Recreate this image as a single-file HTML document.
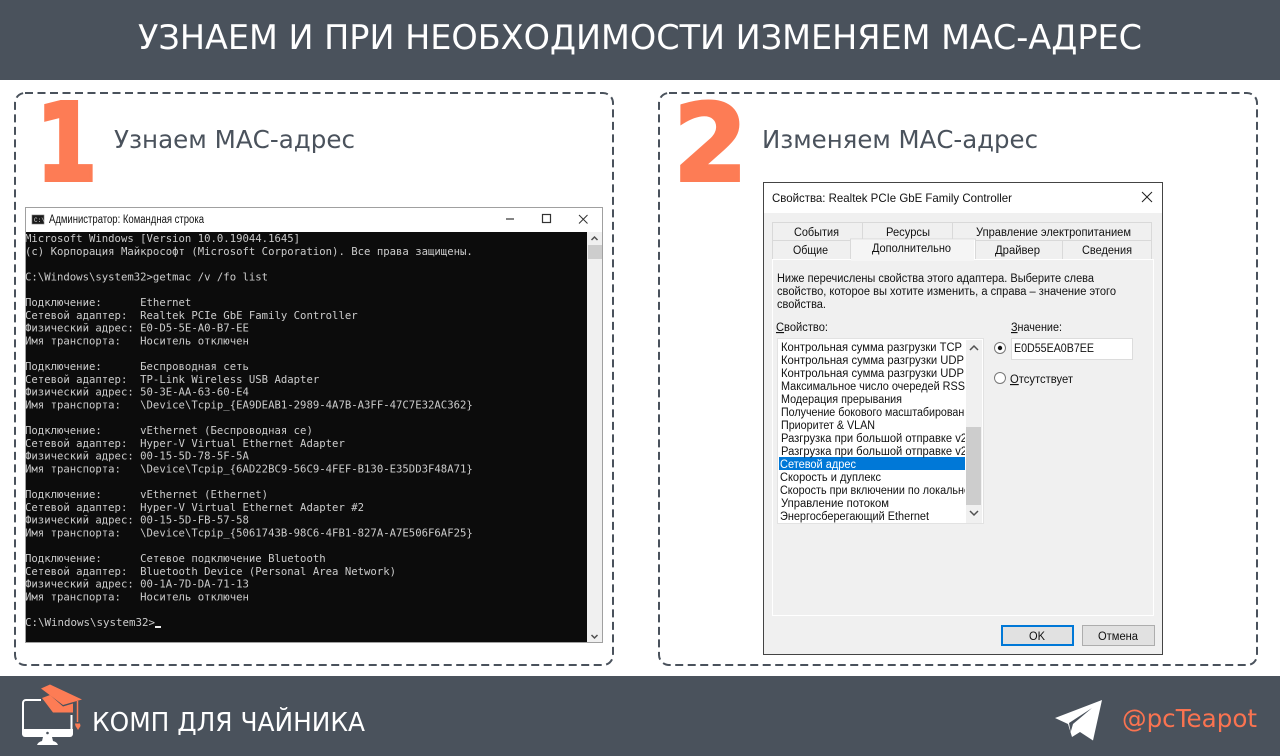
<!DOCTYPE html>
<html lang="ru">
<head>
<meta charset="utf-8">
<title>МАС-адрес</title>
<style>
html,body{margin:0;padding:0;width:1280px;height:756px;overflow:hidden;background:#fff}
svg{display:block;position:absolute;left:0;top:0}
.dj{font-family:"DejaVu Sans",sans-serif}
.con text{font-family:"DejaVu Sans Mono","Liberation Mono",monospace;font-size:10.64px;fill:#cccccc}
.ui{font-family:"Liberation Sans",sans-serif;font-size:11.5px;fill:#111}
.ui text{font-family:"Liberation Sans",sans-serif}
</style>
</head>
<body>
<svg width="1280" height="756" viewBox="0 0 1280 756" xmlns="http://www.w3.org/2000/svg">
<defs>
<clipPath id="listclip"><rect x="779" y="339" width="186" height="184"/></clipPath>
</defs>
<rect width="1280" height="80" fill="#4a525c"/>
<text class="dj" x="138" y="49" font-size="34" fill="#fff" textLength="1004" lengthAdjust="spacingAndGlyphs">УЗНАЕМ И ПРИ НЕОБХОДИМОСТИ ИЗМЕНЯЕМ МАС-АДРЕС</text>

<rect x="15" y="93" width="598" height="572" rx="10" fill="#fff" stroke="#4a525c" stroke-width="2" stroke-dasharray="8 4.5"/>
<rect x="659" y="93" width="598" height="572" rx="10" fill="#fff" stroke="#4a525c" stroke-width="2" stroke-dasharray="8 4.5"/>

<text class="dj" transform="translate(66.5 180) scale(.82 1)" text-anchor="middle" font-size="107" font-weight="700" fill="#fd7c55" stroke="#fd7c55" stroke-width="4">1</text>
<text class="dj" transform="translate(710.5 180.5)" text-anchor="middle" font-size="107" font-weight="700" fill="#fd7c55" stroke="#fd7c55" stroke-width="3">2</text>
<text class="dj" x="114" y="148" font-size="25" fill="#4a525c" textLength="241" lengthAdjust="spacingAndGlyphs">Узнаем МАС-адрес</text>
<text class="dj" x="762" y="148" font-size="25" fill="#4a525c" textLength="276" lengthAdjust="spacingAndGlyphs">Изменяем МАС-адрес</text>

<!-- CMD window -->
<rect x="25.5" y="207.5" width="577" height="435" fill="#fff" stroke="#a0a0a0"/>
<rect x="32" y="215" width="12" height="9" fill="#1a1a1a" stroke="#777" stroke-width=".6"/>
<text x="34" y="222" font-family="Liberation Mono,monospace" font-size="6" fill="#ddd">C:\</text>
<text class="ui" x="49" y="223" style="font-size:11.5px" textLength="155" lengthAdjust="spacingAndGlyphs">Администратор: Командная строка</text>
<path d="M506 219h8" stroke="#333" stroke-width="1.2"/>
<rect x="542.5" y="214.5" width="8" height="8" fill="none" stroke="#333" stroke-width="1.2"/>
<path d="M579 215l8.500 8.500M587.500 215l-8.500 8.500" stroke="#333" stroke-width="1"/>
<rect x="26" y="232" width="561" height="410" fill="#0c0c0c"/>
<rect x="587" y="232" width="15" height="410" fill="#f0f0f0"/>
<rect x="588" y="245" width="14" height="14" fill="#cdcdcd"/>
<path d="M591.500 240l3-3 3 3" fill="none" stroke="#505050" stroke-width="1.500"/>
<path d="M591.500 635l3 3 3-3" fill="none" stroke="#505050" stroke-width="1.500"/>
<g class="con">
<text x="25" y="242">Microsoft Windows [Version 10.0.19044.1645]</text>
<text x="25" y="254.800">(c) Корпорация Майкрософт (Microsoft Corporation). Все права защищены.</text>
<text x="25" y="280.400">C:\Windows\system32&gt;getmac /v /fo list</text>
<text x="25" y="306" xml:space="preserve">Подключение:      Ethernet</text>
<text x="25" y="318.800" xml:space="preserve">Сетевой адаптер:  Realtek PCIe GbE Family Controller</text>
<text x="25" y="331.600" xml:space="preserve">Физический адрес: E0-D5-5E-A0-B7-EE</text>
<text x="25" y="344.400" xml:space="preserve">Имя транспорта:   Носитель отключен</text>
<text x="25" y="370" xml:space="preserve">Подключение:      Беспроводная сеть</text>
<text x="25" y="382.800" xml:space="preserve">Сетевой адаптер:  TP-Link Wireless USB Adapter</text>
<text x="25" y="395.600" xml:space="preserve">Физический адрес: 50-3E-AA-63-60-E4</text>
<text x="25" y="408.400" xml:space="preserve">Имя транспорта:   \Device\Tcpip_{EA9DEAB1-2989-4A7B-A3FF-47C7E32AC362}</text>
<text x="25" y="434" xml:space="preserve">Подключение:      vEthernet (Беспроводная се)</text>
<text x="25" y="446.800" xml:space="preserve">Сетевой адаптер:  Hyper-V Virtual Ethernet Adapter</text>
<text x="25" y="459.600" xml:space="preserve">Физический адрес: 00-15-5D-78-5F-5A</text>
<text x="25" y="472.400" xml:space="preserve">Имя транспорта:   \Device\Tcpip_{6AD22BC9-56C9-4FEF-B130-E35DD3F48A71}</text>
<text x="25" y="498" xml:space="preserve">Подключение:      vEthernet (Ethernet)</text>
<text x="25" y="510.800" xml:space="preserve">Сетевой адаптер:  Hyper-V Virtual Ethernet Adapter #2</text>
<text x="25" y="523.600" xml:space="preserve">Физический адрес: 00-15-5D-FB-57-58</text>
<text x="25" y="536.400" xml:space="preserve">Имя транспорта:   \Device\Tcpip_{5061743B-98C6-4FB1-827A-A7E506F6AF25}</text>
<text x="25" y="562" xml:space="preserve">Подключение:      Сетевое подключение Bluetooth</text>
<text x="25" y="574.800" xml:space="preserve">Сетевой адаптер:  Bluetooth Device (Personal Area Network)</text>
<text x="25" y="587.600" xml:space="preserve">Физический адрес: 00-1A-7D-DA-71-13</text>
<text x="25" y="600.400" xml:space="preserve">Имя транспорта:   Носитель отключен</text>
<text x="25" y="626" textLength="130" lengthAdjust="spacingAndGlyphs">C:\Windows\system32&gt;</text>
</g>
<rect x="155" y="626" width="6" height="2" fill="#eee"/>

<!-- Dialog -->
<rect x="763.500" y="182.500" width="399" height="472" fill="#f0f0f0" stroke="#444"/>
<rect x="764" y="183" width="398" height="30" fill="#fff"/>
<path d="M1142 192l10 10M1152 192l-10 10" stroke="#222" stroke-width="1"/>
<g class="ui">
<text x="772" y="202" style="font-size:12px" textLength="240" lengthAdjust="spacingAndGlyphs">Свойства: Realtek PCIe GbE Family Controller</text>

<g fill="#f0f0f0" stroke="#d9d9d9">
<rect x="772.500" y="222.500" width="90" height="18"/>
<rect x="862.500" y="222.500" width="90" height="18"/>
<rect x="952.500" y="222.500" width="199" height="18"/>
<rect x="772.500" y="240.500" width="78" height="19"/>
<rect x="975.500" y="240.500" width="87" height="19"/>
<rect x="1062.500" y="240.500" width="89" height="19"/>
</g>
<rect x="772" y="259" width="382" height="357" fill="#fff"/>
<rect x="773" y="260" width="380" height="355" fill="#f0f0f0"/>
<rect x="850" y="239" width="125" height="21" fill="#fff"/>
<rect x="851" y="240" width="123" height="21" fill="#f5f5f5"/>
<path d="M850.500 259v-20h125v20" fill="none" stroke="#d9d9d9"/>

<text x="794" y="236" textLength="45" lengthAdjust="spacingAndGlyphs">События</text>
<text x="886" y="236" textLength="44" lengthAdjust="spacingAndGlyphs">Ресурсы</text>
<text x="976" y="236" textLength="155" lengthAdjust="spacingAndGlyphs">Управление электропитанием</text>
<text x="793" y="254" textLength="35" lengthAdjust="spacingAndGlyphs">Общие</text>
<text x="872" y="252" textLength="79" lengthAdjust="spacingAndGlyphs">Дополнительно</text>
<text x="995" y="254" textLength="45" lengthAdjust="spacingAndGlyphs">Драйвер</text>
<text x="1082" y="254" textLength="50" lengthAdjust="spacingAndGlyphs">Сведения</text>

<text x="777" y="282" textLength="317" lengthAdjust="spacingAndGlyphs">Ниже перечислены свойства этого адаптера. Выберите слева</text>
<text x="777" y="295" textLength="339" lengthAdjust="spacingAndGlyphs">свойство, которое вы хотите изменить, а справа – значение этого</text>
<text x="777" y="308" textLength="49" lengthAdjust="spacingAndGlyphs">свойства.</text>
<text x="776" y="331" textLength="52" lengthAdjust="spacingAndGlyphs"><tspan text-decoration="underline">С</tspan>войство:</text>
<text x="1011" y="331" textLength="51" lengthAdjust="spacingAndGlyphs"><tspan text-decoration="underline">З</tspan>начение:</text>

<rect x="777.500" y="338.500" width="206" height="185" fill="#fff" stroke="#e2e2e2"/>
<rect x="966" y="340" width="16" height="183" fill="#f0f0f0"/>
<rect x="966" y="427" width="15" height="78" fill="#cdcdcd"/>
<path d="M970 350l4-4 4 4" fill="none" stroke="#505050" stroke-width="1.500"/>
<path d="M970 511l4 4 4-4" fill="none" stroke="#505050" stroke-width="1.500"/>
<rect x="779" y="457" width="186" height="13" fill="#0078d7"/>
<g clip-path="url(#listclip)">
<text x="781" y="351" textLength="181" lengthAdjust="spacingAndGlyphs">Контрольная сумма разгрузки TCP</text>
<text x="781" y="364" textLength="183" lengthAdjust="spacingAndGlyphs">Контрольная сумма разгрузки UDP</text>
<text x="781" y="377" textLength="183" lengthAdjust="spacingAndGlyphs">Контрольная сумма разгрузки UDP</text>
<text x="781" y="390" textLength="184" lengthAdjust="spacingAndGlyphs">Максимальное число очередей RSS</text>
<text x="781" y="403" textLength="121" lengthAdjust="spacingAndGlyphs">Модерация прерывания</text>
<text x="781" y="416" textLength="195" lengthAdjust="spacingAndGlyphs">Получение бокового масштабирования</text>
<text x="781" y="429" textLength="94" lengthAdjust="spacingAndGlyphs">Приоритет &amp; VLAN</text>
<text x="781" y="442" textLength="186" lengthAdjust="spacingAndGlyphs">Разгрузка при большой отправке v2</text>
<text x="781" y="455" textLength="186" lengthAdjust="spacingAndGlyphs">Разгрузка при большой отправке v2</text>
<text x="780" y="468" style="fill:#fff" textLength="76" lengthAdjust="spacingAndGlyphs">Сетевой адрес</text>
<text x="780" y="481" textLength="101" lengthAdjust="spacingAndGlyphs">Скорость и дуплекс</text>
<text x="780" y="494" textLength="196" lengthAdjust="spacingAndGlyphs">Скорость при включении по локальной</text>
<text x="781" y="507" textLength="108" lengthAdjust="spacingAndGlyphs">Управление потоком</text>
<text x="780" y="520" textLength="149" lengthAdjust="spacingAndGlyphs">Энергосберегающий Ethernet</text>
</g>

<circle cx="1000" cy="348" r="5.500" fill="#fff" stroke="#777"/>
<circle cx="1000" cy="348" r="2.200" fill="#111"/>
<circle cx="1000" cy="378" r="5.500" fill="#fff" stroke="#777"/>
<rect x="1011.500" y="338.500" width="121" height="21" fill="#fff" stroke="#dcdcdc"/>
<text x="1014" y="352" textLength="80" lengthAdjust="spacingAndGlyphs">E0D55EA0B7EE</text>
<text x="1010" y="383" textLength="63" lengthAdjust="spacingAndGlyphs"><tspan text-decoration="underline">О</tspan>тсутствует</text>

<rect x="1002" y="626" width="71" height="19" fill="#e1e1e1" stroke="#0078d7" stroke-width="2"/>
<text x="1029" y="640" textLength="16" lengthAdjust="spacingAndGlyphs">OK</text>
<rect x="1082.500" y="625.500" width="72" height="20" fill="#e1e1e1" stroke="#adadad"/>
<text x="1098" y="640" textLength="40" lengthAdjust="spacingAndGlyphs">Отмена</text>
</g>

<!-- Footer -->
<rect y="676" width="1280" height="80" fill="#4a525c"/>
<!-- logo monitor -->
<path d="M41 700H26a3 3 0 0 0-3 3v28" fill="none" stroke="#fff" stroke-width="2"/>
<path d="M71.500 715v16" fill="none" stroke="#fff" stroke-width="2"/>
<path d="M22 729h51v5a3 3 0 0 1-3 3H25a3 3 0 0 1-3-3z" fill="#fff"/>
<circle cx="47.500" cy="733" r="1.300" fill="#4a525c"/>
<path d="M43 737h9l1 4q4 1 5 4H37q1-3 5-4z" fill="#fff"/>
<!-- logo cap -->
<path d="M41 688.500L50 684.500L82 699.500L63 705z" fill="#fd7c55"/>
<path d="M42 698L50 695L63 706.500L73 703.500V712.500H53z" fill="#fd7c55"/>
<path d="M77.500 701V722" stroke="#fd7c55" stroke-width="1.500"/>
<path d="M75 723.500h5l.5 2.500-2.500 4-2.500-4z" fill="#fd7c55"/>
<text class="dj" x="92" y="731" font-size="26" fill="#fff" textLength="273" lengthAdjust="spacingAndGlyphs">КОМП ДЛЯ ЧАЙНИКА</text>
<!-- telegram -->
<path d="M1102 700L1055 718L1068 724L1072 737L1080 732L1093 740.500z" fill="#fff"/>
<path d="M1092 708L1069 723L1070.700 732L1073 724z" fill="#4a525c"/>
<text class="dj" x="1122" y="727" font-size="25" fill="#fa7350" textLength="135" lengthAdjust="spacingAndGlyphs">@pcTeapot</text>
</svg>
</body>
</html>
